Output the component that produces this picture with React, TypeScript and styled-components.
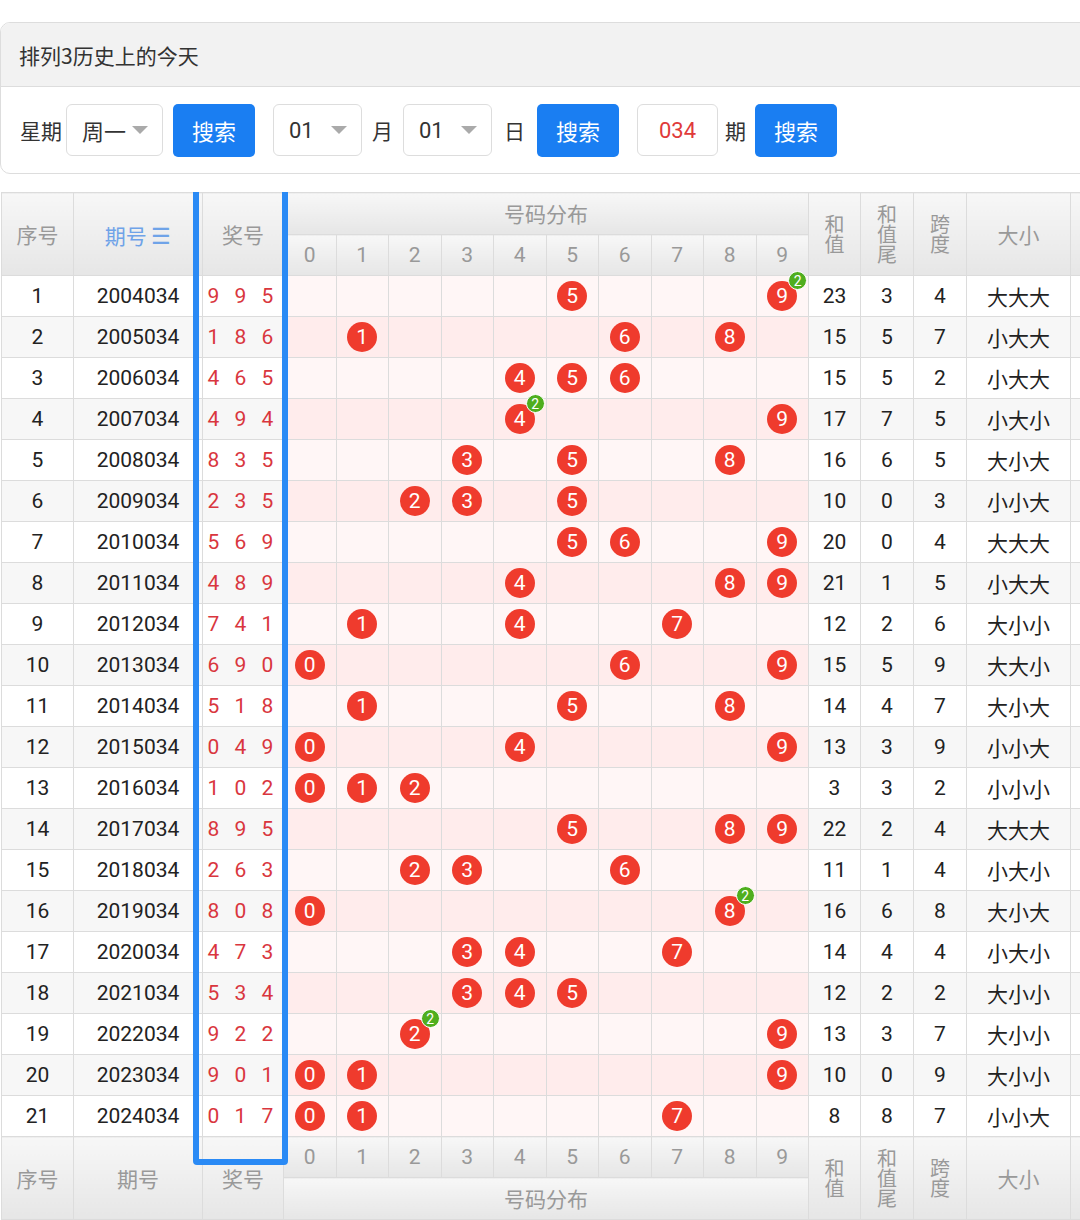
import React from "react";
import styled, { createGlobalStyle } from "styled-components";

const G = createGlobalStyle`
  html,body{margin:0;padding:0;background:#fff;}
  body{font-family:Roboto,"Noto Sans CJK SC",sans-serif;color:#222;width:1080px;overflow:hidden;}
`;
const Panel = styled.div`
  margin:22px 0 0 0;border:1px solid #ddd;border-radius:10px;width:1090px;overflow:hidden;
`;
const PanelHead = styled.div`
  background:#f2f2f2;height:63px;border-bottom:1px solid #ddd;display:flex;align-items:center;padding-left:18px;font-size:21px;color:#333;font-family:"Noto Sans CJK SC",serif;
`;
const Controls = styled.div`
  display:flex;align-items:center;height:86px;padding-left:19px;font-size:21px;color:#333;
`;
const Label = styled.span<{ ml?: number; mr?: number }>`
  margin-left:${p => p.ml ?? 0}px;margin-right:${p => p.mr ?? 0}px;
`;
const Select = styled.div<{ w: number; ml?: number }>`
  width:${p => p.w}px;height:52px;box-sizing:border-box;border:1px solid #ddd;border-radius:6px;margin-left:${p => p.ml ?? 0}px;
  display:flex;align-items:center;justify-content:space-between;padding:0 14px 0 15px;font-size:22px;color:#333;
`;
const Caret = styled.span`
  width:0;height:0;border-left:8px solid transparent;border-right:8px solid transparent;border-top:8px solid #aaa;
`;
const Btn = styled.div<{ ml: number }>`
  width:82px;height:53px;background:#1a7ef2;color:#fff;border-radius:5px;margin-left:${p => p.ml}px;
  display:flex;align-items:center;justify-content:center;font-size:22px;
`;
const Input = styled.div`
  width:81px;height:52px;box-sizing:border-box;border:1px solid #ddd;border-radius:6px;margin-left:18px;
  display:flex;align-items:center;justify-content:center;color:#e03a3a;font-size:22px;
`;
const Wrap = styled.div`
  position:relative;margin-top:18px;width:1080px;overflow:hidden;
`;
const Table = styled.table`
  border-collapse:collapse;table-layout:fixed;width:1130px;margin-left:1px;
  td,th{border:1px solid #dcdcdc;padding:0;text-align:center;}
`;
const Th = styled.th<{ h: number; blue?: boolean }>`
  height:${p => p.h}px;font-weight:normal;color:${p => (p.blue ? "#6fa3e8" : "#999")};font-size:21px;
  background:linear-gradient(#f7f7f7,#e6e6e6);font-family:"Noto Sans CJK SC",serif;line-height:1;
`;
const Tr = styled.tr<{ even: boolean }>`
  height:41px;background:${p => (p.even ? "#f7f7f7" : "#fff")};
`;
const Td = styled.td`
  font-size:21px;color:#222;
`;
const Prize = styled.td`
  font-size:21px;color:#d9363e;letter-spacing:5px;
`;
const Cell = styled.td<{ even: boolean }>`
  background:${p => (p.even ? "#ffecec" : "#fff6f6")};position:relative;
`;
const Ball = styled.span`
  display:inline-flex;width:30px;height:30px;border-radius:50%;background:#ef3b2d;color:#fff;font-size:21px;
  align-items:center;justify-content:center;position:relative;vertical-align:middle;
`;
const Rep = styled.span`
  position:absolute;top:-10px;right:-10px;width:17px;height:17px;border-radius:50%;background:#4fae1e;color:#fff;
  font-size:14px;display:flex;align-items:center;justify-content:center;border:1px solid #fff;
`;
const Frame = styled.div`
  position:absolute;left:193px;top:-6px;width:95px;height:979px;box-sizing:border-box;border:6px solid #2a8af5;border-radius:4px;pointer-events:none;
`;

const rows: [string, string, number, number, number, string][] = [
  ["2004034","995",23,3,4,"大大大"],["2005034","186",15,5,7,"小大大"],["2006034","465",15,5,2,"小大大"],
  ["2007034","494",17,7,5,"小大小"],["2008034","835",16,6,5,"大小大"],["2009034","235",10,0,3,"小小大"],
  ["2010034","569",20,0,4,"大大大"],["2011034","489",21,1,5,"小大大"],["2012034","741",12,2,6,"大小小"],
  ["2013034","690",15,5,9,"大大小"],["2014034","518",14,4,7,"大小大"],["2015034","049",13,3,9,"小小大"],
  ["2016034","102",3,3,2,"小小小"],["2017034","895",22,2,4,"大大大"],["2018034","263",11,1,4,"小大小"],
  ["2019034","808",16,6,8,"大小大"],["2020034","473",14,4,4,"小大小"],["2021034","534",12,2,2,"大小小"],
  ["2022034","922",13,3,7,"大小小"],["2023034","901",10,0,9,"大小小"],["2024034","017",8,8,7,"小小大"],
];
const digits = [0,1,2,3,4,5,6,7,8,9];
const Stack = ({ t }: { t: string }) => <span style={{ display: "inline-block", width: "1em", fontSize: 20, lineHeight: 1 }}>{t}</span>;

export default function App() {
  return (
    <>
      <G />
      <Panel>
        <PanelHead>排列3历史上的今天</PanelHead>
        <Controls>
          <Label>星期</Label>
          <Select w={97} ml={4}>周一<Caret /></Select>
          <Btn ml={10}>搜索</Btn>
          <Select w={89} ml={18}>01<Caret /></Select>
          <Label ml={10} mr={10}>月</Label>
          <Select w={89}>01<Caret /></Select>
          <Label ml={12}>日</Label>
          <Btn ml={12}>搜索</Btn>
          <Input>034</Input>
          <Label ml={7}>期</Label>
          <Btn ml={9}>搜索</Btn>
        </Controls>
      </Panel>
      <Wrap>
        <Table>
          <colgroup>
            <col style={{ width: 72 }} /><col style={{ width: 129 }} /><col style={{ width: 81 }} />
            {digits.map(d => <col key={d} style={{ width: 52.5 }} />)}
            <col style={{ width: 52 }} /><col style={{ width: 53 }} /><col style={{ width: 53 }} /><col style={{ width: 104 }} /><col style={{ width: 60 }} />
          </colgroup>
          <thead>
            <tr>
              <Th h={41} rowSpan={2}>序号</Th>
              <Th h={41} rowSpan={2} blue>期号 <span style={{ fontSize: 22 }}>☰</span></Th>
              <Th h={41} rowSpan={2}>奖号</Th>
              <Th h={41} colSpan={10}>号码分布</Th>
              <Th h={41} rowSpan={2}><Stack t="和值" /></Th>
              <Th h={41} rowSpan={2}><Stack t="和值尾" /></Th>
              <Th h={41} rowSpan={2}><Stack t="跨度" /></Th>
              <Th h={41} rowSpan={2}>大小</Th>
              <Th h={41} rowSpan={2}></Th>
            </tr>
            <tr>{digits.map(d => <Th h={40} key={d} style={{ fontFamily: "Roboto" }}>{d}</Th>)}</tr>
          </thead>
          <tbody>
            {rows.map((r, i) => {
              const ds = r[1].split("").map(Number);
              const even = i % 2 === 1;
              return (
                <Tr key={i} even={even}>
                  <Td>{i + 1}</Td>
                  <Td>{r[0]}</Td>
                  <Prize>{r[1].split("").join(" ")}</Prize>
                  {digits.map(d => {
                    const c = ds.filter(x => x === d).length;
                    return (
                      <Cell key={d} even={even}>
                        {c > 0 && <Ball>{d}{c > 1 && <Rep>{c}</Rep>}</Ball>}
                      </Cell>
                    );
                  })}
                  <Td>{r[2]}</Td><Td>{r[3]}</Td><Td>{r[4]}</Td>
                  <Td style={{ fontFamily: "'Noto Sans CJK SC'" }}>{r[5]}</Td>
                  <Td></Td>
                </Tr>
              );
            })}
          </tbody>
          <tfoot>
            <tr>
              <Th h={41} rowSpan={2}>序号</Th>
              <Th h={41} rowSpan={2}>期号</Th>
              <Th h={41} rowSpan={2}>奖号</Th>
              {digits.map(d => <Th h={40} key={d} style={{ fontFamily: "Roboto" }}>{d}</Th>)}
              <Th h={41} rowSpan={2}><Stack t="和值" /></Th>
              <Th h={41} rowSpan={2}><Stack t="和值尾" /></Th>
              <Th h={41} rowSpan={2}><Stack t="跨度" /></Th>
              <Th h={41} rowSpan={2}>大小</Th>
              <Th h={41} rowSpan={2}></Th>
            </tr>
            <tr><Th h={41} colSpan={10}>号码分布</Th></tr>
          </tfoot>
        </Table>
        <Frame />
      </Wrap>
    </>
  );
}
